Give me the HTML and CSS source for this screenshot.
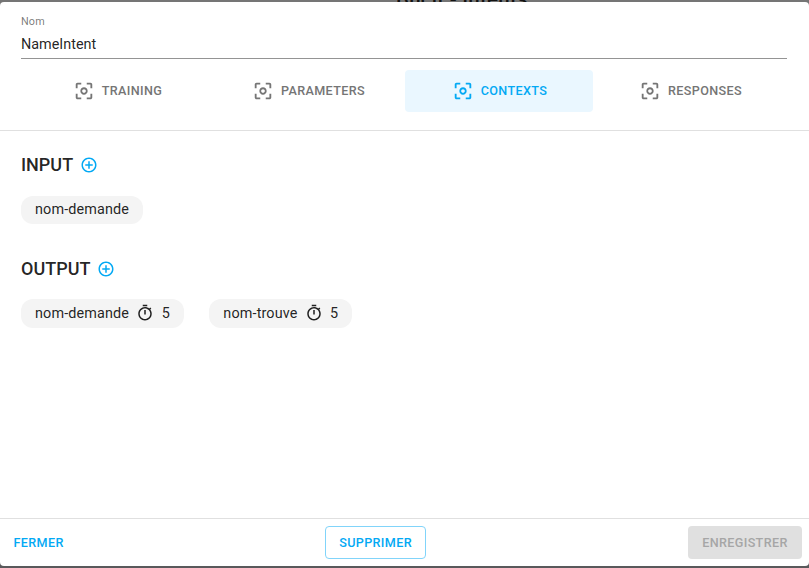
FILE: index.html
```html
<!DOCTYPE html>
<html lang="fr">
<head>
<meta charset="utf-8">
<title>NameIntent</title>
<link rel="stylesheet" href="styles.css">
</head>
<body>
<svg class="defs" aria-hidden="true">
<symbol id="focus" viewBox="0 0 24 24"><path d="M5 15H3v4c0 1.1.9 2 2 2h4v-2H5v-4zM5 5h4V3H5c-1.1 0-2 .9-2 2v4h2V5zm14-2h-4v2h4v4h2V5c0-1.1-.9-2-2-2zm0 16h-4v2h4c1.1 0 2-.9 2-2v-4h-2v4zM12 8c-2.21 0-4 1.79-4 4s1.79 4 4 4 4-1.79 4-4-1.79-4-4-4zm0 6c-1.1 0-2-.9-2-2s.9-2 2-2 2 .9 2 2-.9 2-2 2z"/></symbol>
<symbol id="add" viewBox="0 0 24 24"><path d="M13 7h-2v4H7v2h4v4h2v-4h4v-2h-4V7zm-1-5C6.48 2 2 6.48 2 12s4.48 10 10 10 10-4.480 10-10S17.520 2 12 2zm0 18c-4.410 0-8-3.590-8-8s3.590-8 8-8 8 3.590 8 8-3.590 8-8 8z"/></symbol>
<symbol id="timer" viewBox="0 0 24 24"><path d="M15 1H9v2h6V1zm-4 13h2V8h-2v6zm8.030-6.610l1.420-1.420c-.43-.51-.9-.99-1.410-1.410l-1.420 1.420C16.070 4.740 14.120 4 12 4c-4.970 0-9 4.030-9 9s4.020 9 9 9 9-4.030 9-9c0-2.120-.74-4.070-1.970-5.610zM12 20c-3.870 0-7-3.130-7-7s3.130-7 7-7 7 3.130 7 7-3.130 7-7 7z"/></symbol>
</svg>
<div class="backdrop-title">Bucit - Intents</div>
<main class="dialog">
<header class="head">
<label class="label" for="nom">Nom</label>
<input class="field" id="nom" value="NameIntent">
<nav class="tabs">
<button class="tab"><svg class="tab-icon"><use href="#focus"/></svg>TRAINING</button>
<button class="tab"><svg class="tab-icon"><use href="#focus"/></svg>PARAMETERS</button>
<button class="tab active"><svg class="tab-icon"><use href="#focus"/></svg>CONTEXTS</button>
<button class="tab"><svg class="tab-icon"><use href="#focus"/></svg>RESPONSES</button>
</nav>
</header>
<div class="content">
<section class="group">
<h2 class="title"><span class="title-text">INPUT</span><svg class="add"><use href="#add"/></svg></h2>
<div class="chips"><span class="chip plain">nom-demande</span></div>
</section>
<section class="group">
<h2 class="title"><span class="title-text">OUTPUT</span><svg class="add"><use href="#add"/></svg></h2>
<div class="chips">
<span class="chip">nom-demande<svg class="timer"><use href="#timer"/></svg>5</span>
<span class="chip">nom-trouve<svg class="timer"><use href="#timer"/></svg>5</span>
</div>
</section>
</div>
<footer class="foot">
<button class="btn text">FERMER</button>
<button class="btn outlined">SUPPRIMER</button>
<button class="btn disabled" disabled>ENREGISTRER</button>
</footer>
</main>
</body>
</html>
```
FILE: styles.css
```css
* { box-sizing: border-box; }
body {
  margin: 0;
  height: 568px;
  padding: 2px 0;
  overflow: hidden;
  position: relative;
  background: linear-gradient(#757575 50%, #59595b 50%);
  font-family: Roboto, "Liberation Sans", sans-serif;
  color: rgba(0, 0, 0, .87);
}
svg { fill: currentColor; flex: none; }
.defs { position: absolute; width: 0; height: 0; }
.backdrop-title {
  position: absolute;
  top: -13px;
  left: 396px;
  font-size: 20.5px;
  line-height: 24px;
  font-weight: 500;
  letter-spacing: .25px;
  white-space: nowrap;
}
.dialog {
  position: relative;
  height: 564px;
  background: #fff;
  border-radius: 4px;
  display: flex;
  flex-direction: column;
}
.head {
  height: 129px;
  padding: 13px 22px 0 21px;
  border-bottom: 1px solid #e0e0e0;
}
.label {
  display: block;
  font-size: 10.8px;
  line-height: 14px;
  letter-spacing: .14px;
  color: rgba(0, 0, 0, .54);
}
.field {
  display: block;
  width: 100%;
  height: 30px;
  padding: 2px 0 0;
  border: 0;
  border-bottom: 1px solid #949494;
  outline: 0;
  font: 400 14.4px/20px Roboto, sans-serif;
  letter-spacing: 0;
  color: inherit;
}
.tabs {
  display: grid;
  grid-template-columns: repeat(4, 1fr);
  margin-top: 11px;
}
.tab {
  height: 42px;
  margin: 0 2.5px 0 1px;
  padding: 0;
  border: 0;
  border-radius: 4px;
  background: none;
  display: flex;
  align-items: center;
  justify-content: center;
  font: 500 12.6px/22px Roboto, sans-serif;
  letter-spacing: .36px;
  color: #757575;
}
.tab:nth-child(1) { padding-left: 3px; }
.tab:nth-child(2) { padding-left: 2px; }
.tab:nth-child(3) { padding-left: 1px; }
.tab.active { background: #eaf7ff; color: #03a9f4; }
.tab-icon { width: 22px; height: 22px; margin-right: 7px; }
.content { flex: 1; padding: 22px 21px 0; }
.group { height: 104px; }
.title {
  display: flex;
  align-items: center;
  height: 24px;
  margin: 0 0 18px;
  font-size: 18px;
  font-weight: 500;
  letter-spacing: 0;
}
.title-text { padding-bottom: 2px; }
.add { width: 18px; height: 18px; margin-left: 7px; color: #03a9f4; }
.chips { display: flex; gap: 25.5px; }
.chip {
  display: flex;
  align-items: center;
  height: 29px;
  padding: 0 14px 1px;
  border-radius: 12px;
  background: #f4f4f4;
  font-size: 14.4px;
  letter-spacing: .135px;
}
.chip.plain { height: 28px; margin-top: 1px; padding-bottom: 2px; }
.timer { width: 18px; height: 18px; margin: 0 7.5px 0 7px; }
.foot {
  height: 48px;
  padding: 7px 7px 0 0;
  border-top: 1px solid #e0e0e0;
  display: flex;
  justify-content: space-between;
}
.btn {
  height: 33px;
  padding: 1px 14px 0;
  border: 0;
  border-radius: 4px;
  background: none;
  font: 500 12.6px/22px Roboto, sans-serif;
  letter-spacing: .36px;
  color: #03a9f4;
}
.text { padding: 1px 13.5px 0; }
.outlined { margin-right: 14px; padding: 1px 13px 0; border: 1px solid #81d4fa; }
.disabled { padding: 1px 14.3px 0; background: #e0e0e0; color: #a6a6a6; }
```
